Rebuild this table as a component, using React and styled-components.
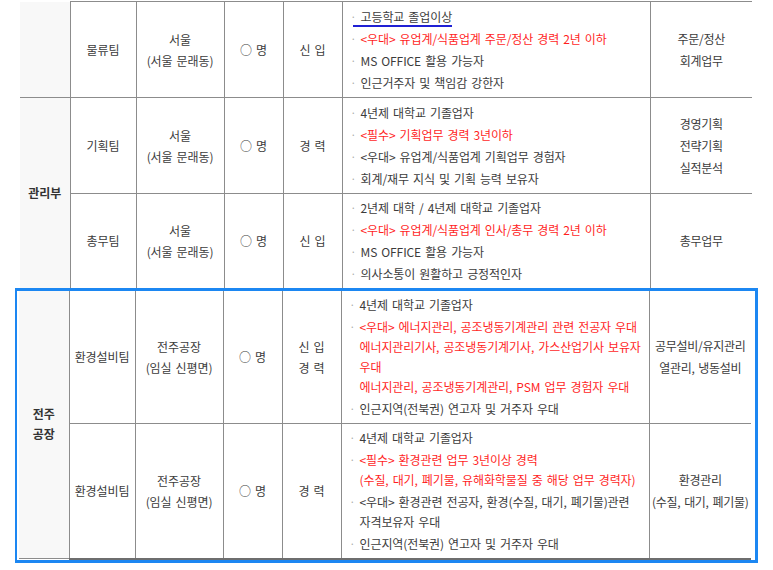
import React from 'react'
import styled, { createGlobalStyle } from 'styled-components'

const GlobalStyle = createGlobalStyle`
    body {
        margin: 0;
        background: #fff;
        font-family: "Noto Sans CJK KR", "Noto Sans", sans-serif;
    }
`

const Page = styled.div`
    padding: 1px 0 0 20px;
    width: 773px;
    box-sizing: border-box;
`

const Table = styled.table`
    width: 732px;
    table-layout: fixed;
    border-collapse: collapse;
    font-size: 12px;
    letter-spacing: -0.1px;
    word-spacing: 1.5px;
    color: #3c3c3c;
`

const Highlight = styled.div`
    margin-left: -5px;
    width: 743px;
    box-sizing: border-box;
    border: 3px solid #1c87f2;
    border-left-width: 2px;
    padding: 0 3px 0 2px;
`

const Row = styled.tr`
    height: ${p => p.$h}px;
`

const Cell = styled.td`
    padding: 0;
    text-align: center;
    vertical-align: middle;
    line-height: 21px;
    white-space: nowrap;
    border-left: 1px solid #8c8c8c;
    border-top: ${p => (p.$noTop ? 'none' : '1px solid #8c8c8c')};
    border-bottom: ${p => (p.$last ? '2px solid #6e6e6e' : p.$noBottom ? 'none' : '1px solid #8c8c8c')};
`

const DeptCell = styled(Cell)`
    background: #f8f8f8;
    border-left: none;
    font-weight: 700;
    color: #333;
    line-height: 20px;
`

const DutyCell = styled(Cell)`
    line-height: 22px;
    letter-spacing: -0.3px;
`

const DescCell = styled(Cell)`
    text-align: left;
    padding: 0 0 0 8px;
    line-height: 20px;
`

const Item = styled.div`
    display: flex;
    padding: 1px 0;
    width: ${p => (p.$mark ? 'fit-content' : 'auto')};
    color: ${p => (p.$red ? '#ff1f1f' : '#3c3c3c')};
    background: ${p => (p.$mark ? 'linear-gradient(#2020d4, #2020d4) no-repeat 2px 19px / calc(100% - 2px) 2px' : 'none')};
`

const Dot = styled.span`
    flex: 0 0 10px;
    color: #a8a8a8;
    font-size: 10px;
`

const Lines = styled.div``

const rowsTop = [
    {
        h: 96,
        dept: { cont: true },
        team: '물류팀',
        place: ['서울', '(서울 문래동)'],
        type: ['신 입'],
        reqs: [
            { lines: ['고등학교 졸업이상'], mark: true },
            { lines: ['<우대> 유업계/식품업계 주문/정산 경력 2년 이하'], red: true },
            { lines: ['MS OFFICE 활용 가능자'] },
            { lines: ['인근거주자 및 책임감 강한자'] },
        ],
        duty: ['주문/정산', '회계업무'],
    },
    {
        h: 96,
        dept: { label: ['관리부'], span: 2, open: true },
        team: '기획팀',
        place: ['서울', '(서울 문래동)'],
        type: ['경 력'],
        reqs: [
            { lines: ['4년제 대학교 기졸업자'] },
            { lines: ['<필수> 기획업무 경력 3년이하'], red: true },
            { lines: ['<우대> 유업계/식품업계 기획업무 경험자'] },
            { lines: ['회계/재무 지식 및 기획 능력 보유자'] },
        ],
        duty: ['경영기획', '전략기획', '실적분석'],
    },
    {
        h: 94,
        last: 'none',
        team: '총무팀',
        place: ['서울', '(서울 문래동)'],
        type: ['신 입'],
        reqs: [
            { lines: ['2년제 대학 / 4년제 대학교 기졸업자'] },
            { lines: ['<우대> 유업계/식품업계 인사/총무 경력 2년 이하'], red: true },
            { lines: ['MS OFFICE 활용 가능자'] },
            { lines: ['의사소통이 원활하고 긍정적인자'] },
        ],
        duty: ['총무업무'],
    },
]

const rowsFactory = [
    {
        h: 133,
        first: true,
        dept: { label: ['전주', '공장'], span: 2 },
        team: '환경설비팀',
        place: ['전주공장', '(임실 신평면)'],
        type: ['신 입', '경 력'],
        reqs: [
            { lines: ['4년제 대학교 기졸업자'] },
            {
                red: true,
                lines: [
                    '<우대> 에너지관리, 공조냉동기계관리 관련 전공자 우대',
                    '에너지관리기사, 공조냉동기계기사, 가스산업기사 보유자',
                    '우대',
                    '에너지관리, 공조냉동기계관리, PSM 업무 경험자 우대',
                ],
            },
            { lines: ['인근지역(전북권) 연고자 및 거주자 우대'] },
        ],
        duty: ['공무설비/유지관리', '열관리, 냉동설비'],
    },
    {
        h: 135,
        last: 'end',
        team: '환경설비팀',
        place: ['전주공장', '(임실 신평면)'],
        type: ['경 력'],
        reqs: [
            { lines: ['4년제 대학교 기졸업자'] },
            {
                red: true,
                lines: ['<필수> 환경관련 업무 3년이상 경력', '(수질, 대기, 폐기물, 유해화학물질 중 해당 업무 경력자)'],
            },
            { lines: ['<우대> 환경관련 전공자, 환경(수질, 대기, 폐기물)관련', '자격보유자 우대'] },
            { lines: ['인근지역(전북권) 연고자 및 거주자 우대'] },
        ],
        duty: ['환경관리', '(수질, 대기, 폐기물)'],
    },
]

const Stack = ({ lines }) =>
    lines.map((l, i) => (
        <React.Fragment key={i}>
            {i > 0 && <br />}
            {l}
        </React.Fragment>
    ))

const Cols = () => (
    <colgroup>
        <col style={{ width: 50 }} />
        <col style={{ width: 66 }} />
        <col style={{ width: 88 }} />
        <col style={{ width: 59 }} />
        <col style={{ width: 59 }} />
        <col style={{ width: 308 }} />
        <col style={{ width: 102 }} />
    </colgroup>
)

const JobRow = ({ row, noTopAll }) => {
    const edge = {
        $noTop: noTopAll,
        $noBottom: row.last === 'none',
        $last: row.last === 'end',
    }
    return (
        <Row $h={row.h}>
            {row.dept && (
                <DeptCell
                    rowSpan={row.dept.span || 1}
                    $noTop={row.dept.cont || noTopAll}
                    $noBottom={row.dept.open}
                >
                    {row.dept.label && <Stack lines={row.dept.label} />}
                </DeptCell>
            )}
            <Cell {...edge}>{row.team}</Cell>
            <Cell {...edge}><Stack lines={row.place} /></Cell>
            <Cell {...edge}>○ 명</Cell>
            <Cell {...edge}><Stack lines={row.type} /></Cell>
            <DescCell {...edge}>
                {row.reqs.map((r, i) => (
                    <Item key={i} $red={r.red} $mark={r.mark}>
                        <Dot>·</Dot>
                        <Lines><Stack lines={r.lines} /></Lines>
                    </Item>
                ))}
            </DescCell>
            <DutyCell {...edge}><Stack lines={row.duty} /></DutyCell>
        </Row>
    )
}

export default function App() {
    return (
        <Page>
            <GlobalStyle />
            <Table>
                <Cols />
                <tbody>
                    {rowsTop.map((row, i) => (
                        <JobRow key={i} row={row} noTopAll={false} />
                    ))}
                </tbody>
            </Table>
            <Highlight>
                <Table>
                    <Cols />
                    <tbody>
                        {rowsFactory.map((row, i) => (
                            <JobRow key={i} row={row} noTopAll={row.first} />
                        ))}
                    </tbody>
                </Table>
            </Highlight>
        </Page>
    )
}
